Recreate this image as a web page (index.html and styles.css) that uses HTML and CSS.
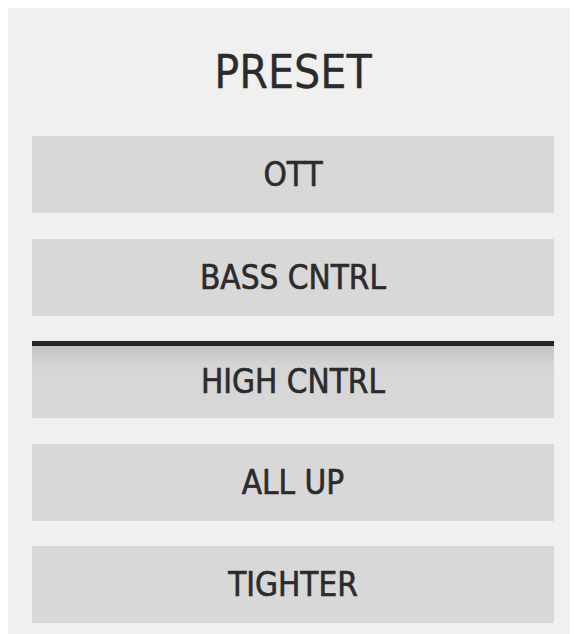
FILE: index.html
```html
<!DOCTYPE html>
<html>
<head>
<meta charset="utf-8">
<link rel="stylesheet" href="styles.css">
</head>
<body>
<div class="panel">
  <div class="title">PRESET</div>
  <div class="list">
    <div class="btn">OTT</div>
    <div class="btn">BASS CNTRL</div>
    <div class="btn active">HIGH CNTRL</div>
    <div class="btn">ALL UP</div>
    <div class="btn">TIGHTER</div>
  </div>
</div>
</body>
</html>
```
FILE: styles.css
```css
html, body {
  margin: 0;
  padding: 0;
  background: #ffffff;
}
body {
  padding: 8px 8px 0 8px;
  font-family: "DejaVu Sans Condensed", "DejaVu Sans", sans-serif;
  color: #2b2b2b;
}
.panel {
  width: 562px;
  height: 626px;
  box-sizing: border-box;
  background: #f0f0f0;
  padding: 0 16px 0 24px;
}
.title {
  height: 128px;
  line-height: 128px;
  text-align: center;
  font-size: 46px;
  -webkit-text-stroke: 0.3px #2b2b2b;
}
.list {
  display: flex;
  flex-direction: column;
  gap: 25.5px;
}
.btn {
  height: 77px;
  line-height: 77px;
  background: #d8d8d8;
  text-align: center;
  font-size: 33px;
  box-sizing: border-box;
  -webkit-text-stroke: 0.6px #2b2b2b;
}
.btn.active {
  border-top: 5px solid #262626;
  line-height: 72px;
  background: linear-gradient(to bottom, #c4c4c4 0px, #d6d6d6 22px, #d8d8d8 100%);
}
```
